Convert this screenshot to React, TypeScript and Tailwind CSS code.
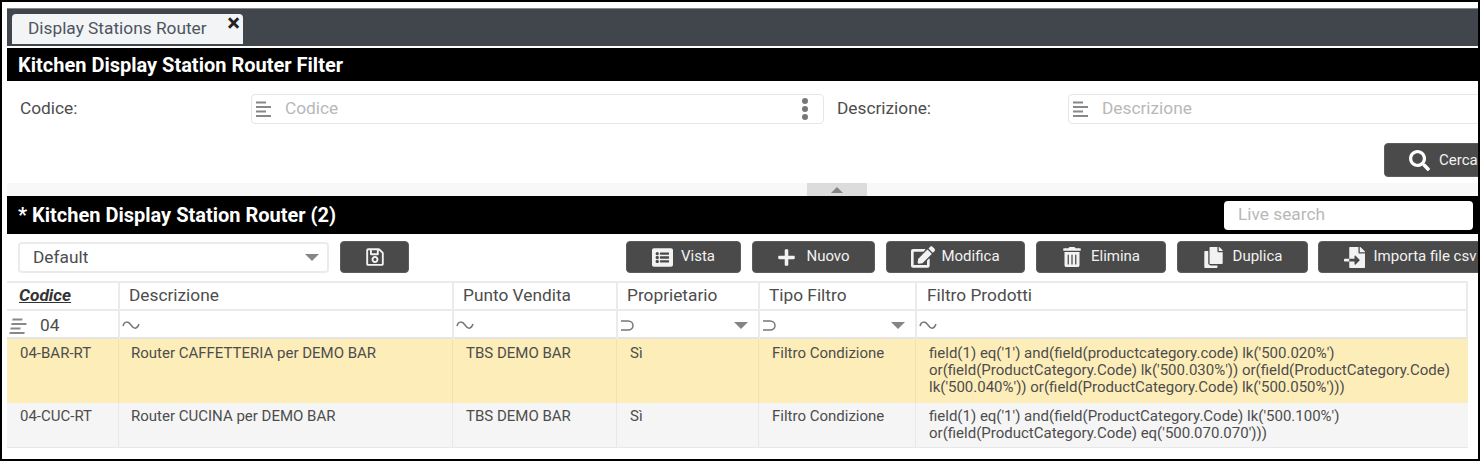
import React from "react";
import { FaListAlt, FaPlus, FaEdit, FaTrashAlt, FaCopy, FaFileImport, FaSearch, FaRegSave } from "react-icons/fa";

const LinesIcon = ({ className = "" }: { className?: string }) => (
  <svg width="17" height="16" viewBox="0 0 17 16" className={className} fill="none" stroke="#888" strokeWidth="2">
    <path d="M1 1.5H11M1 6H16M1 10.5H11M1 15H16" />
  </svg>
);
const Tilde = () => (
  <svg width="18" height="10" viewBox="0 0 18 10" fill="none" stroke="#777" strokeWidth="1.5">
    <path d="M1 6C2 1.5 6 0.5 9 5S15 9.5 17 4" />
  </svg>
);
const Sup = () => (
  <svg width="14" height="11" viewBox="0 0 14 11" fill="none" stroke="#777" strokeWidth="1.5">
    <path d="M1 1H8C11 1 13 3 13 5.5S11 10 8 10H1" />
  </svg>
);
const Caret = () => <div className="w-0 h-0 border-l-[7px] border-r-[7px] border-t-[7px] border-l-transparent border-r-transparent border-t-[#858585]" />;

const Btn = ({ icon, label, w, ml, gap = "gap-[9px]" }: { icon: React.ReactNode; label?: string; w: string; ml: string; gap?: string }) => (
  <div className={`${w} ${ml} ${gap} h-8 shrink-0 bg-[#4a4a4a] rounded border border-[#5c5c5c] text-[#f2f2f2] text-[15px] flex items-center justify-center whitespace-nowrap`}>
    {icon}
    {label && <span className="mb-[2px]">{label}</span>}
  </div>
);

const columns = "grid grid-cols-[111px_334px_164px_142px_157px_553px] w-[1461px]";
const hCell = "border-l-2 border-[#ebebeb] text-[#4d4d4d] text-[17.3px] pl-[9px] flex items-center pb-[3px]";
const fCell = "border-l-2 border-t-2 border-[#ebebeb] flex items-center justify-between pl-[2px] pt-[1px]";
const rCell = "pl-[13px] pt-[6px] border-l border-black/5 text-[15px] leading-[17px] text-[#4d4d4d]";
const rCell2 = "pl-[13px] pt-[5px] border-l border-black/5 text-[15px] leading-[17px] text-[#4d4d4d]";

export default function App() {
  return (
    <div className="w-[1480px] h-[461px] border-2 border-black bg-white overflow-hidden font-['Roboto',sans-serif]">
      <div className="pl-[5px] h-full flex flex-col">
        <div className="h-[6px] shrink-0" />
        <div className="h-[38px] shrink-0 bg-[#41464d] border-t border-[#888] pl-[5px] pt-[5px] flex items-start">
          <div className="w-[231px] h-[30px] bg-[#f2f4f6] rounded-t-sm pl-4 relative flex items-center text-[17.3px] text-[#4d5560]">
            Display Stations Router
            <span className="absolute right-[3px] top-[-3px] text-[#222] text-[24px] font-bold leading-[24px]">×</span>
          </div>
        </div>
        <div className="h-[2px] shrink-0" />
        <div className="h-[33px] shrink-0 bg-black text-white text-[20px] font-bold pl-[11px] flex items-center">Kitchen Display Station Router Filter</div>

        <div className="h-[102px] shrink-0">
          <div className="flex items-center h-[30px] mt-[13px]">
            <span className="w-[244px] shrink-0 pl-[13px] text-[17.3px] text-[#4d4d4d]">Codice:</span>
            <div className="w-[573px] shrink-0 h-[30px] border border-[#e6e6e6] rounded-sm flex items-center pl-[3px] pr-[15px]">
              <LinesIcon />
              <span className="ml-[13px] text-[17.3px] text-[#b8b8b8]">Codice</span>
              <div className="ml-auto flex flex-col gap-[2px]">
                <div className="w-[6px] h-[6px] rounded-full bg-[#777]" />
                <div className="w-[6px] h-[6px] rounded-full bg-[#777]" />
                <div className="w-[6px] h-[6px] rounded-full bg-[#777]" />
              </div>
            </div>
            <span className="w-[244px] shrink-0 pl-[13px] text-[17.3px] text-[#4d4d4d]">Descrizione:</span>
            <div className="w-[420px] shrink-0 h-[30px] border border-[#e6e6e6] rounded-sm flex items-center pl-[3px]">
              <LinesIcon />
              <span className="ml-[13px] text-[17.3px] text-[#b8b8b8]">Descrizione</span>
            </div>
          </div>
          <div className="flex mt-[19px] ml-[1377px] h-[34px] w-[120px] bg-[#4a4a4a] rounded border border-[#5c5c5c] items-center pl-6 gap-[9px] text-[#f2f2f2] text-[15px] whitespace-nowrap">
            <FaSearch size={21} className="text-white" />
            <span>Cerca</span>
          </div>
        </div>

        <div className="h-[13px] shrink-0 bg-[#f8f8f8] flex justify-center pr-[5px]">
          <div className="w-[60px] bg-[#dcdcdc] flex items-center justify-center ml-[193px]">
            <div className="w-0 h-0 border-l-[6px] border-r-[6px] border-b-[6px] border-l-transparent border-r-transparent border-b-[#858585]" />
          </div>
        </div>

        <div className="h-[38px] shrink-0 bg-black pl-[11px] pr-[5px] flex items-center justify-between">
          <span className="text-white text-[20px] font-bold">* Kitchen Display Station Router (2)</span>
          <div className="w-[249px] h-[29px] bg-white rounded-sm pl-[14px] flex items-center text-[17.3px] text-[#b8b8b8]">Live search</div>
        </div>

        <div className="h-[47px] shrink-0 flex items-start pt-[7px]">
          <div className="w-[311px] h-[31px] ml-[11px] mt-px shrink-0 border-2 border-[#ebebeb] rounded-sm pl-[13px] pr-[8px] flex items-center justify-between text-[17.3px] text-[#4d4d4d]">
            Default
            <Caret />
          </div>
          <Btn w="w-[69px]" ml="ml-[11px]" icon={<FaRegSave size={20} />} />
          <Btn w="w-[115px]" ml="ml-[217px]" gap="gap-[8px]" label="Vista" icon={<FaListAlt size={21} />} />
          <Btn w="w-[123px]" ml="ml-[11px]" gap="gap-[10px]" label="Nuovo" icon={<FaPlus size={19} />} />
          <Btn w="w-[139px]" ml="ml-[11px]" gap="gap-[6px]" label="Modifica" icon={<FaEdit size={24} />} />
          <Btn w="w-[130px]" ml="ml-[11px]" label="Elimina" icon={<FaTrashAlt size={20} />} />
          <Btn w="w-[131px]" ml="ml-[11px]" label="Duplica" icon={<FaCopy size={21} />} />
          <Btn w="w-[184px]" ml="ml-[10px]" label="Importa file csv" icon={<FaFileImport size={21} />} />
        </div>

        <div className={`${columns} h-[28px] shrink-0 border-t-2 border-[#ebebeb]`}>
          <div className="text-[#333] text-[17.3px] font-bold italic underline pl-3 flex items-center pb-[3px]">Codice</div>
          <div className={hCell}>Descrizione</div>
          <div className={hCell}>Punto Vendita</div>
          <div className={hCell}>Proprietario</div>
          <div className={hCell}>Tipo Filtro</div>
          <div className={`${hCell} border-r-2 !pl-[10px]`}>Filtro Prodotti</div>
        </div>
        <div className={`${columns} h-[30px] shrink-0 border-b-2 border-[#e4e4e4]`}>
          <div className="border-t-2 border-[#ebebeb] flex items-center pl-[3px] gap-[13px] text-[17.3px] text-[#4d4d4d] pt-[2px]">
            <LinesIcon className="-skew-x-12" />
            04
          </div>
          <div className={fCell}><Tilde /></div>
          <div className={fCell}><Tilde /></div>
          <div className={`${fCell} pr-[10px]`}><Sup /><Caret /></div>
          <div className={`${fCell} pr-[10px]`}><Sup /><Caret /></div>
          <div className={`${fCell} border-r-2`}><Tilde /></div>
        </div>
        <div className={`${columns} h-[64px] shrink-0 bg-[#fdeeb9]`}>
          <div className="pl-[13px] pt-[6px] text-[15px] leading-[17px] text-[#4d4d4d]">04-BAR-RT</div>
          <div className={`${rCell} !pl-[12px]`}>Router CAFFETTERIA per DEMO BAR</div>
          <div className={rCell}>TBS DEMO BAR</div>
          <div className={rCell}>Sì</div>
          <div className={rCell}>Filtro Condizione</div>
          <div className={`${rCell} whitespace-nowrap`}>
            field(1) eq('1') and(field(productcategory.code) lk('500.020%')<br />
            or(field(ProductCategory.Code) lk('500.030%')) or(field(ProductCategory.Code)<br />
            lk('500.040%')) or(field(ProductCategory.Code) lk('500.050%')))
          </div>
        </div>
        <div className={`${columns} h-[45px] shrink-0 bg-[#f5f5f5] border-b border-[#e8e8e8]`}>
          <div className="pl-[13px] pt-[5px] text-[15px] leading-[17px] text-[#4d4d4d]">04-CUC-RT</div>
          <div className={`${rCell2} !pl-[12px]`}>Router CUCINA per DEMO BAR</div>
          <div className={rCell2}>TBS DEMO BAR</div>
          <div className={rCell2}>Sì</div>
          <div className={rCell2}>Filtro Condizione</div>
          <div className={`${rCell2} whitespace-nowrap`}>
            field(1) eq('1') and(field(ProductCategory.Code) lk('500.100%')<br />
            or(field(ProductCategory.Code) eq('500.070.070')))
          </div>
        </div>
      </div>
    </div>
  );
}
